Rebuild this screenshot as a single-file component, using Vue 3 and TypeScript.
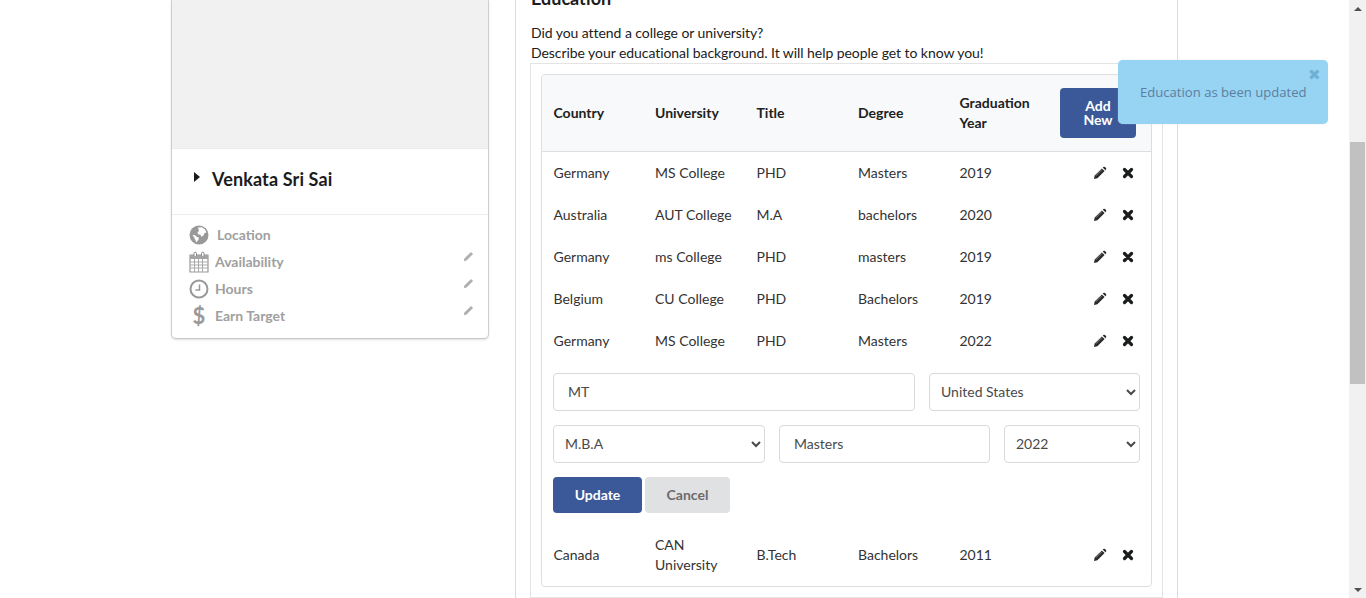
<template>
  <div class="shell">
    <main class="page">
      <aside class="profile-card">
        <div class="photo"></div>
        <div class="name-row">
          <span class="caret"></span>
          <span class="name">Venkata Sri Sai</span>
        </div>
        <ul class="meta">
          <li v-for="item in metaItems" :key="item.label" class="meta-row">
            <span class="meta-icon">
              <svg v-if="item.icon === 'globe'" viewBox="0 0 20 20" width="20" height="20">
                <circle cx="10" cy="10" r="9.500" fill="#999" />
                <path d="M9 2.500l4-.2 3 2.200 1.500 3-2 .5-1 2.500-2.200 1.200-.8-2-2.500-.5-.5-2 1.500-1.200z" fill="#fff" />
                <path d="M3.500 10l2.500.3 2 1.700 1.800.6-.3 2.200-1.500 1.700-.5 1-1.200-2.500-1-2.200z" fill="#fff" />
              </svg>
              <svg v-else-if="item.icon === 'calendar'" viewBox="0 0 20 22" width="20" height="22">
                <path d="M1 4h18v17H1z" fill="none" stroke="#999" stroke-width="1.200" />
                <path d="M1 4h18v4H1z" fill="#a4a4a4" />
                <path d="M1 11h18M1 14h18M1 17h18M5.500 8v13M9.500 8v13M13.500 8v13" stroke="#aaa" stroke-width="1" />
                <path d="M5 5V2.500a1 1 0 0 1 2.500 0V5M12.500 5V2.500a1 1 0 0 1 2.500 0V5" fill="#fff" stroke="#888" stroke-width="1" />
              </svg>
              <svg v-else-if="item.icon === 'clock'" viewBox="0 0 20 20" width="20" height="20">
                <circle cx="10" cy="10" r="8.500" fill="none" stroke="#999" stroke-width="2" />
                <path d="M10.500 5.500V11H6.500" fill="none" stroke="#999" stroke-width="1.500" />
              </svg>
              <span v-else class="dollar">$</span>
            </span>
            <span class="meta-label" :class="{ 'meta-label-wide': item.icon === 'globe' }">{{ item.label }}</span>
            <svg v-if="item.editable" class="meta-edit" viewBox="0 0 14 14" width="11" height="11">
              <path d="M1 13l.8-3.500L9.500 1.800a1 1 0 0 1 1.400 0l1.300 1.300a1 1 0 0 1 0 1.400L4.500 12.200z" fill="#b0b0b0" />
            </svg>
          </li>
        </ul>
      </aside>

      <section class="panel">
        <h3 class="panel-title">Education</h3>
        <p class="panel-copy">Did you attend a college or university?<br />Describe your educational background. It will help people get to know you!</p>
        <div class="outer-box">
          <div class="table-box">
            <div class="grid-row head">
              <span>Country</span>
              <span>University</span>
              <span>Title</span>
              <span>Degree</span>
              <span>Graduation Year</span>
              <span><button class="btn-primary add-btn" type="button">Add New</button></span>
            </div>

            <div v-for="row in rows" :key="row.id" class="grid-row body-row">
              <span>{{ row.country }}</span>
              <span>{{ row.university }}</span>
              <span>{{ row.title }}</span>
              <span>{{ row.degree }}</span>
              <span>{{ row.year }}</span>
              <span class="actions">
                <svg viewBox="0 0 14 14" width="14" height="14">
                  <path d="M1 13l.7-3.400L8.900 2.400l2.700 2.700L4.400 12.300z" fill="#2a2a2a" />
                  <path d="M9.700 1.600l.7-.6a1.200 1.200 0 0 1 1.600 0l1 1a1.200 1.200 0 0 1 0 1.600l-.6.700z" fill="#2a2a2a" />
                  <path d="M2.800 9.800l6.300-6.300" stroke="#999" stroke-width=".8" />
                </svg>
                <svg viewBox="0 0 12 12" width="12" height="12">
                  <path d="M2.500 2.500l7 7M9.500 2.500l-7 7" stroke="#1b1c1d" stroke-width="3.200" stroke-linecap="round" />
                </svg>
              </span>
            </div>

            <form class="edit-form" @submit.prevent>
              <div class="form-line first">
                <input class="field pad" type="text" value="MT" readonly />
                <select class="field"><option>United States</option></select>
              </div>
              <div class="form-line second">
                <select class="field"><option>M.B.A</option></select>
                <input class="field pad" type="text" value="Masters" readonly />
                <select class="field"><option>2022</option></select>
              </div>
              <div class="form-actions">
                <button class="btn-primary update-btn" type="button">Update</button>
                <button class="btn-cancel" type="button">Cancel</button>
              </div>
            </form>

            <div class="grid-row body-row last-row">
              <span>Canada</span>
              <span>CAN University</span>
              <span>B.Tech</span>
              <span>Bachelors</span>
              <span>2011</span>
              <span class="actions">
                <svg viewBox="0 0 14 14" width="14" height="14">
                  <path d="M1 13l.7-3.400L8.900 2.400l2.700 2.700L4.400 12.300z" fill="#2a2a2a" />
                  <path d="M9.700 1.600l.7-.6a1.200 1.200 0 0 1 1.600 0l1 1a1.200 1.200 0 0 1 0 1.600l-.6.700z" fill="#2a2a2a" />
                  <path d="M2.800 9.800l6.300-6.300" stroke="#999" stroke-width=".8" />
                </svg>
                <svg viewBox="0 0 12 12" width="12" height="12">
                  <path d="M2.500 2.500l7 7M9.500 2.500l-7 7" stroke="#1b1c1d" stroke-width="3.200" stroke-linecap="round" />
                </svg>
              </span>
            </div>
          </div>
        </div>
      </section>

      <div class="toast" role="status">
        <span class="toast-close">&#10006;</span>
        <span>Education as been updated</span>
      </div>
    </main>

    <div class="scrollbar" aria-hidden="true">
      <span class="arrow up"></span>
      <div class="track"><div class="thumb"></div></div>
      <span class="arrow down"></span>
    </div>
  </div>
</template>

<script setup lang="ts">
interface MetaItem {
  icon: 'globe' | 'calendar' | 'clock' | 'dollar';
  label: string;
  editable: boolean;
}

interface EducationRow {
  id: number;
  country: string;
  university: string;
  title: string;
  degree: string;
  year: number;
}

const metaItems: MetaItem[] = [
  { icon: 'globe', label: 'Location', editable: false },
  { icon: 'calendar', label: 'Availability', editable: true },
  { icon: 'clock', label: 'Hours', editable: true },
  { icon: 'dollar', label: 'Earn Target', editable: true },
];

const rows: EducationRow[] = [
  { id: 1, country: 'Germany', university: 'MS College', title: 'PHD', degree: 'Masters', year: 2019 },
  { id: 2, country: 'Australia', university: 'AUT College', title: 'M.A', degree: 'bachelors', year: 2020 },
  { id: 3, country: 'Germany', university: 'ms College', title: 'PHD', degree: 'masters', year: 2019 },
  { id: 4, country: 'Belgium', university: 'CU College', title: 'PHD', degree: 'Bachelors', year: 2019 },
  { id: 5, country: 'Germany', university: 'MS College', title: 'PHD', degree: 'Masters', year: 2022 },
];
</script>

<style>
html,
body {
  margin: 0;
  background: #fff;
  overflow: hidden;
}
</style>

<style scoped>
.shell {
  display: flex;
  height: 598px;
  overflow: hidden;
  font-family: Lato, "Liberation Sans", sans-serif;
  font-size: 14px;
  line-height: 20px;
  color: #212121;
}

.page {
  position: relative;
  flex: 1;
  display: flex;
  align-items: flex-start;
  gap: 27px;
  padding-left: 172px;
  overflow: hidden;
}

.profile-card {
  width: 316px;
  flex-shrink: 0;
  background: #fff;
  border-radius: 0 0 4px 4px;
  box-shadow: 0 1px 3px 0 #bdbdbf, 0 0 0 1px #d9d9da;
}

.photo {
  height: 148px;
  background: #f1f1f1;
}

.name-row {
  display: flex;
  align-items: center;
  height: 67px;
  padding: 0 0 6px 22px;
  box-sizing: border-box;
  border-top: 1px solid #ececec;
  border-bottom: 1px solid #ececec;
}

.caret {
  width: 0;
  height: 0;
  border-left: 6px solid #1b1c1d;
  border-top: 5px solid transparent;
  border-bottom: 5px solid transparent;
  margin-right: 12px;
  margin-bottom: 3px;
}

.name {
  font-size: 18px;
  font-weight: 700;
  line-height: 24px;
  letter-spacing: 0.13px;
  color: #1b1c1d;
}

.meta {
  list-style: none;
  margin: 0;
  padding: 6px 14px 9px 17px;
}

.meta-row {
  display: flex;
  align-items: center;
  height: 27px;
}

.meta-icon {
  width: 20px;
  display: flex;
  justify-content: center;
  margin-right: 6px;
}

.dollar {
  font-size: 22px;
  line-height: 27px;
  font-weight: 700;
  color: #999;
}

.meta-label {
  flex: 1;
  font-weight: 700;
  color: #a0a0a0;
}

.meta-label-wide {
  padding-left: 2px;
}

.meta-edit {
  margin-bottom: 10px;
}

.panel {
  width: 633px;
  flex-shrink: 0;
  padding: 0 14px;
  border-left: 1px solid #dcdcdc;
  border-right: 1px solid #dcdcdc;
  min-height: 598px;
}

.panel-title {
  margin: -13px 0 14px;
  padding-left: 1px;
  font-size: 18px;
  font-weight: 700;
  line-height: 22px;
  color: #1b1c1d;
}

.panel-copy {
  margin: 0;
  padding-left: 1px;
  letter-spacing: -0.06px;
}

.outer-box {
  padding: 10px;
  border: 1px solid #e4e4e4;
}

.table-box {
  border: 1px solid #dedede;
  border-radius: 4px;
}

.grid-row {
  display: grid;
  grid-template-columns: repeat(6, 1fr);
  align-items: center;
}

.grid-row > span {
  padding: 0 12px 0 11.500px;
}

.head {
  height: 77px;
  box-sizing: border-box;
  background: #f8f9fb;
  border-bottom: 1px solid #dedede;
  border-radius: 4px 4px 0 0;
  font-weight: 700;
  color: #212121;
}

.body-row {
  height: 42px;
  color: #333;
}

.last-row {
  height: 62px;
}

.btn-primary {
  border: 0;
  border-radius: 4px;
  background: #3b5998;
  color: #fff;
  font: 700 14px/14px Lato, "Liberation Sans", sans-serif;
}

.add-btn {
  width: 76px;
  height: 50px;
  margin-left: -1px;
  padding: 0 16px;
}

.actions {
  display: flex;
  align-items: center;
  gap: 15px;
  padding-left: 43px !important;
}

.edit-form {
  display: flex;
  flex-direction: column;
  gap: 14px;
  padding: 11px;
}

.form-line {
  display: grid;
  gap: 14px;
}

.first {
  grid-template-columns: 362fr 211fr;
}

.second {
  grid-template-columns: 212fr 211fr 136fr;
}

.field {
  width: 100%;
  height: 38px;
  box-sizing: border-box;
  padding: 0 7px 2px;
  border: 1px solid #d9d9d9;
  border-radius: 4px;
  background: #fff;
  font: 14px Lato, "Liberation Sans", sans-serif;
  color: #4a4a4a;
  outline: none;
}

.pad {
  padding: 0 14px 2px;
}

.form-actions {
  display: flex;
  gap: 3px;
}

.update-btn,
.btn-cancel {
  height: 36px;
}

.update-btn {
  width: 89px;
}

.btn-cancel {
  width: 85px;
  border: 0;
  border-radius: 4px;
  background: #e0e1e2;
  color: #6b6b6b;
  font: 700 14px/14px Lato, "Liberation Sans", sans-serif;
}

.toast {
  position: absolute;
  top: 60px;
  left: 1118px;
  width: 210px;
  height: 64px;
  box-sizing: border-box;
  padding: 22px 0 0 22px;
  border-radius: 5px;
  background: #97d3f2;
  box-shadow: 0 0 1px #b9e1f6;
  font-family: "Open Sans", sans-serif;
  font-size: 13.100px;
  line-height: 20px;
  color: #5c7f9e;
}

.toast-close {
  position: absolute;
  top: 5px;
  right: 7px;
  font-size: 15px;
  line-height: 18px;
  color: #6fb1d6;
}

.scrollbar {
  width: 17px;
  flex-shrink: 0;
  display: flex;
  flex-direction: column;
  background: #f1f1f1;
}

.arrow {
  height: 17px;
  display: flex;
  align-items: center;
  justify-content: center;
}

.arrow::before {
  content: "";
  border-left: 4px solid transparent;
  border-right: 4px solid transparent;
}

.up::before {
  border-bottom: 4px solid #505050;
}

.down::before {
  border-top: 4px solid #505050;
}

.track {
  flex: 1;
  padding: 125px 1px 0 1px;
}

.thumb {
  height: 242px;
  background: #c1c1c1;
}
</style>
